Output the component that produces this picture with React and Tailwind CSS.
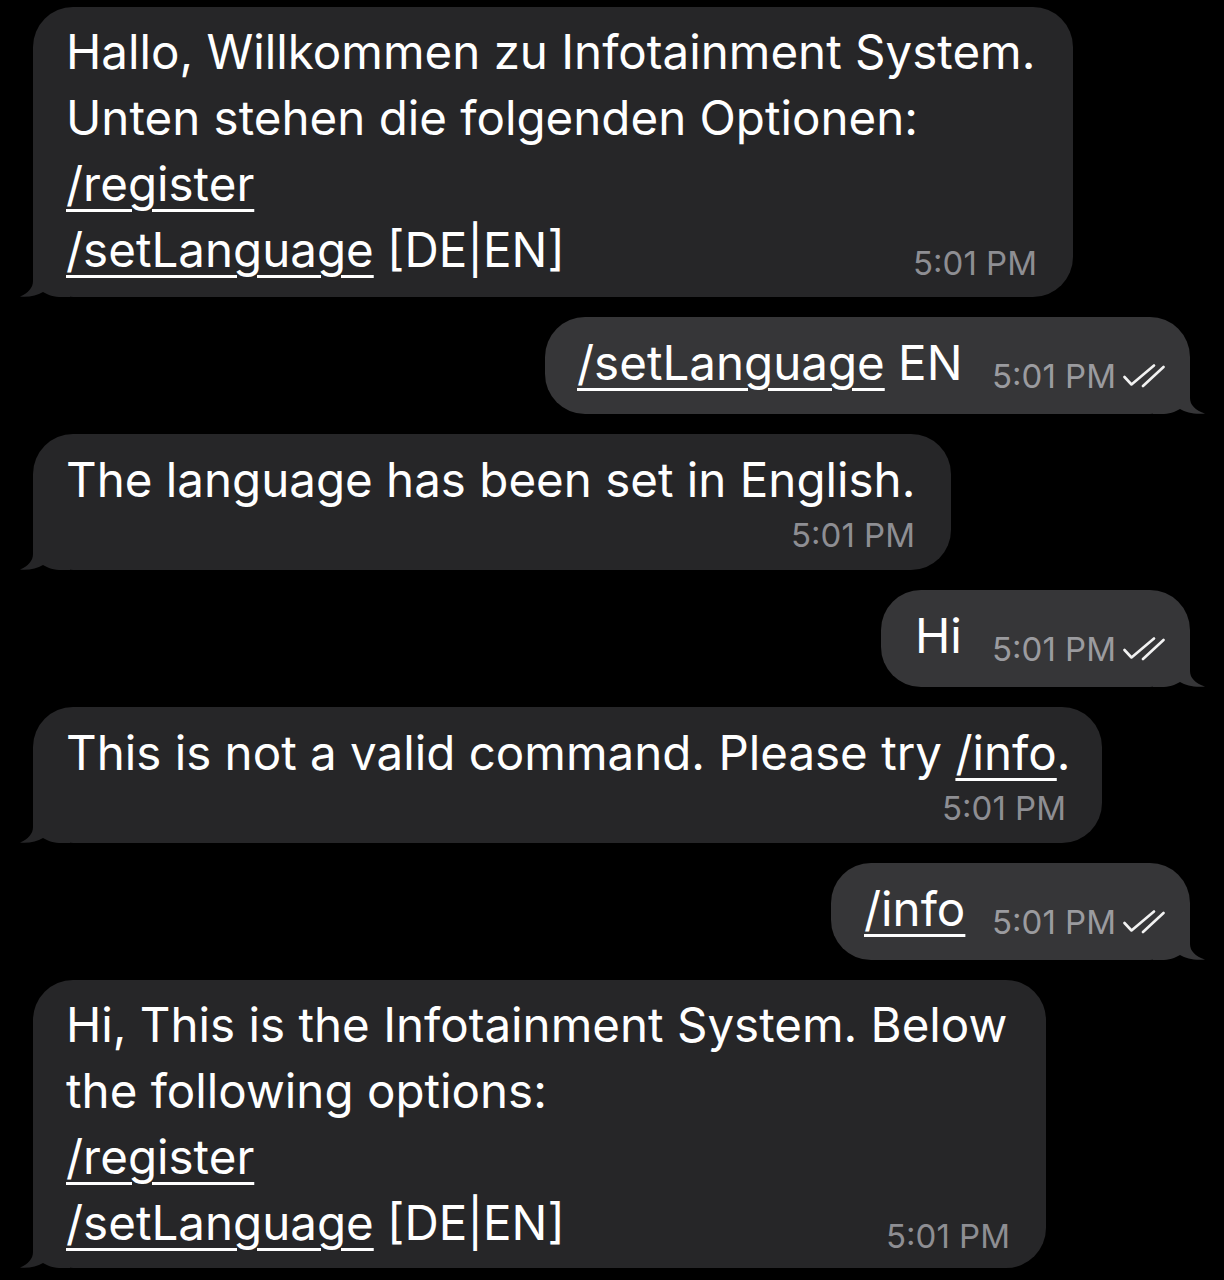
import React from "react";

const IN = "#262628";
const OUT = "#363638";

function TailLeft() {
  return (
    <svg
      className="absolute left-[-13px] bottom-0 w-[50px] h-[40px]"
      viewBox="0 0 50 40"
    >
      <path
        d="M13 0 L13 24 C13 31 8 36 0 39.6 C9 40.5 17 38.5 23 35 C28 38 34 40 42 40 L50 40 L50 0 Z"
        fill={IN}
      />
    </svg>
  );
}

function TailRight() {
  return (
    <svg
      className="absolute right-[-15px] bottom-0 w-[52px] h-[40px]"
      viewBox="0 0 52 40"
    >
      <path
        d="M37 0 L37 24 C37 31 42 36 52 39.6 C41 40.5 33 38.5 27 35 C22 38 16 40 8 40 L0 40 L0 0 Z"
        fill={OUT}
      />
    </svg>
  );
}

function Checks() {
  return (
    <svg className="w-[42px] h-[26px] ml-[7px]" viewBox="0 0 42 26" fill="none">
      <path
        d="M1.5 14 L8.5 21.5 L31 2.5"
        stroke="#f2f2f2"
        strokeWidth="2.6"
        strokeLinecap="round"
        strokeLinejoin="round"
      />
      <path d="M20 23 L40.5 4" stroke="#f2f2f2" strokeWidth="2.6" strokeLinecap="round" />
    </svg>
  );
}

function Cmd({ children }) {
  return (
    <span className="underline decoration-[2.5px] underline-offset-[8px]">{children}</span>
  );
}

function Time({ out }) {
  return (
    <span
      className={
        "text-[33px] leading-[40px] whitespace-nowrap " +
        (out ? "text-[#9b9b9f]" : "text-[#8e8e93]")
      }
    >
      5:01 PM
    </span>
  );
}

function OutTime() {
  return (
    <div className="flex items-center h-[40px] shrink-0">
      <Time out />
      <Checks />
    </div>
  );
}

function InBubble({ w, children }) {
  return (
    <div
      className={"relative self-start rounded-[40px] bg-[#262628] pl-[33px] pr-[36px] " + w}
    >
      <TailLeft />
      <div className="relative">{children}</div>
    </div>
  );
}

function OutBubble({ w, pl, children }) {
  return (
    <div
      className={
        "relative self-end rounded-[40px] bg-[#363638] pr-[25px] pt-[13px] pb-[18px] flex items-end justify-between " +
        w +
        " " +
        pl
      }
    >
      <TailRight />
      <div className="relative text-[47.5px] leading-[66px] whitespace-nowrap text-white">
        {children}
      </div>
      <div className="relative">
        <OutTime />
      </div>
    </div>
  );
}

export default function App() {
  return (
    <div
      className="min-h-screen w-full bg-black pt-[7px] pl-[33px] pr-[34px] pb-[12px] flex flex-col gap-[20px] text-white"
      style={{ fontFamily: "Inter, 'Noto Sans', sans-serif" }}
    >
      <InBubble w="w-[1040px] pt-[12px] pb-[14px]">
        <div className="text-[47.5px] leading-[66px] whitespace-nowrap">
          <div>Hallo, Willkommen zu Infotainment System.</div>
          <div>Unten stehen die folgenden Optionen:</div>
          <div>
            <Cmd>/register</Cmd>
          </div>
          <div className="flex items-end justify-between">
            <span>
              <Cmd>/setLanguage</Cmd> [DE|EN]
            </span>
            <Time />
          </div>
        </div>
      </InBubble>

      <OutBubble w="w-[645px]" pl="pl-[32px]">
        <Cmd>/setLanguage</Cmd> EN
      </OutBubble>

      <InBubble w="w-[918px] pt-[13px] pb-[15px]">
        <div className="text-[47.5px] leading-[66px] whitespace-nowrap">
          The language has been set in English.
        </div>
        <div className="mt-[2px] text-right">
          <Time />
        </div>
      </InBubble>

      <OutBubble w="w-[309px]" pl="pl-[34px]">
        Hi
      </OutBubble>

      <InBubble w="w-[1069px] pt-[13px] pb-[15px]">
        <div className="text-[47.5px] leading-[66px] whitespace-nowrap">
          This is not a valid command. Please try <Cmd>/info</Cmd>.
        </div>
        <div className="mt-[2px] text-right">
          <Time />
        </div>
      </InBubble>

      <OutBubble w="w-[359px]" pl="pl-[33px]">
        <Cmd>/info</Cmd>
      </OutBubble>

      <InBubble w="w-[1013px] pt-[12px] pb-[12px]">
        <div className="text-[47.5px] leading-[66px] whitespace-nowrap">
          <div>Hi, This is the Infotainment System. Below</div>
          <div>the following options:</div>
          <div>
            <Cmd>/register</Cmd>
          </div>
          <div className="flex items-end justify-between">
            <span>
              <Cmd>/setLanguage</Cmd> [DE|EN]
            </span>
            <Time />
          </div>
        </div>
      </InBubble>
    </div>
  );
}
